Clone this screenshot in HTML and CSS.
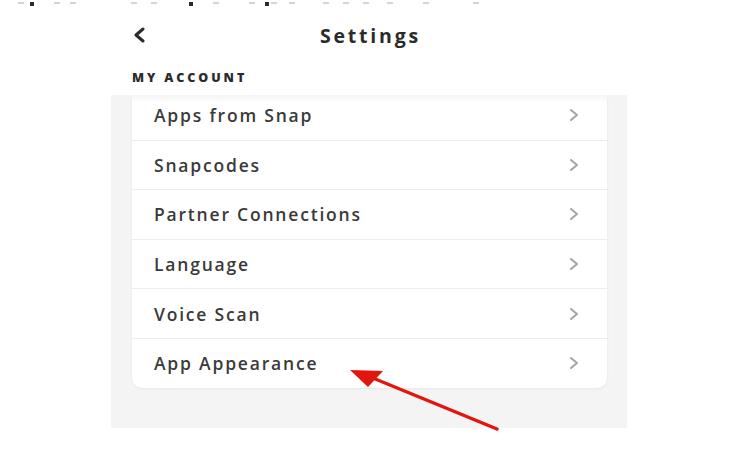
FILE: index.html
```html
<!DOCTYPE html>
<html>
<head>
<meta charset="utf-8">
<link rel="stylesheet" href="styles.css">
</head>
<body>
<div class="topline">
  <span class="mk" style="margin-left:18px"></span><span class="mk dk" style="margin-left:6px"></span><span class="mk" style="margin-left:20px"></span><span class="mk" style="margin-left:10px"></span><span class="mk" style="margin-left:55px"></span><span class="mk" style="margin-left:14px"></span><span class="mk dk" style="margin-left:32px"></span><span class="mk" style="margin-left:20px"></span><span class="mk" style="margin-left:30px"></span><span class="mk dk" style="margin-left:10px"></span><span class="mk" style="margin-left:2px"></span><span class="mk" style="margin-left:12px"></span><span class="mk" style="margin-left:28px"></span><span class="mk" style="margin-left:14px"></span><span class="mk" style="margin-left:14px"></span><span class="mk" style="margin-left:18px"></span><span class="mk" style="margin-left:30px"></span><span class="mk" style="margin-left:44px"></span>
</div>
<div class="screen">
  <div class="header">
    <svg class="back" width="14" height="16" viewBox="0 0 14 16"><polyline points="11,2 4,8 11,14" fill="none" stroke="#2b2b2b" stroke-width="3" stroke-linecap="round" stroke-linejoin="round"/></svg>
    <div class="title">Settings</div>
  </div>
  <div class="section">MY ACCOUNT</div>
  <div class="panel">
    <div class="card">
      <div class="row"><span>Apps from Snap</span><svg class="chev" width="10" height="14" viewBox="0 0 10 14"><polyline points="2,2 8,7 2,12" fill="none" stroke="#a3a3a3" stroke-width="2" stroke-linecap="round" stroke-linejoin="round"/></svg></div>
      <div class="row"><span>Snapcodes</span><svg class="chev" width="10" height="14" viewBox="0 0 10 14"><polyline points="2,2 8,7 2,12" fill="none" stroke="#a3a3a3" stroke-width="2" stroke-linecap="round" stroke-linejoin="round"/></svg></div>
      <div class="row"><span>Partner Connections</span><svg class="chev" width="10" height="14" viewBox="0 0 10 14"><polyline points="2,2 8,7 2,12" fill="none" stroke="#a3a3a3" stroke-width="2" stroke-linecap="round" stroke-linejoin="round"/></svg></div>
      <div class="row"><span>Language</span><svg class="chev" width="10" height="14" viewBox="0 0 10 14"><polyline points="2,2 8,7 2,12" fill="none" stroke="#a3a3a3" stroke-width="2" stroke-linecap="round" stroke-linejoin="round"/></svg></div>
      <div class="row"><span>Voice Scan</span><svg class="chev" width="10" height="14" viewBox="0 0 10 14"><polyline points="2,2 8,7 2,12" fill="none" stroke="#a3a3a3" stroke-width="2" stroke-linecap="round" stroke-linejoin="round"/></svg></div>
      <div class="row"><span>App Appearance</span><svg class="chev" width="10" height="14" viewBox="0 0 10 14"><polyline points="2,2 8,7 2,12" fill="none" stroke="#a3a3a3" stroke-width="2" stroke-linecap="round" stroke-linejoin="round"/></svg></div>
    </div>
  </div>
</div>
<svg class="arrow" width="750" height="450" viewBox="0 0 750 450">
  <line x1="497" y1="429" x2="368" y2="376" stroke="#e3150f" stroke-width="3.5" stroke-linecap="round"/>
  <polygon points="350,370 383,371 368,387" fill="#e3150f"/>
</svg>
</body>
</html>
```
FILE: styles.css
```css
html, body {
  margin: 0;
  padding: 0;
}
body {
  width: 750px;
  height: 450px;
  overflow: hidden;
  background: #ffffff;
  font-family: "Open Sans", "DejaVu Sans", sans-serif;
  color: #333333;
  position: relative;
}
.topline {
  height: 8px;
  display: flex;
  align-items: flex-start;
  padding-top: 2px;
  box-sizing: border-box;
}
.mk {
  display: block;
  width: 6px;
  height: 2px;
  background: #d2d4d9;
  flex: none;
}
.mk.dk {
  width: 4px;
  height: 4px;
  background: #2a2a30;
}
.screen {
  margin-left: 111px;
  width: 516px;
}
.header {
  height: 52px;
  display: flex;
  align-items: center;
  justify-content: center;
  position: relative;
}
.back {
  position: absolute;
  left: 21px;
  top: 19px;
}
.title {
  font-size: 19.5px;
  font-weight: 700;
  color: #2b2b2b;
  letter-spacing: 2.8px;
  margin-top: 2px;
  margin-left: 3px;
}
.section {
  height: 35px;
  padding-left: 21px;
  padding-top: 9px;
  box-sizing: border-box;
  font-size: 12.5px;
  font-weight: 800;
  color: #2b2b2b;
  letter-spacing: 2.9px;
}
.panel {
  background: #f4f4f5;
  height: 333px;
  padding: 0 20px 0 21px;
  overflow: hidden;
  box-sizing: border-box;
}
.card {
  margin-top: -5px;
  background: #ffffff;
  border-radius: 10px;
  box-shadow: 0 1px 3px rgba(0,0,0,0.06);
}
.row {
  height: 49.6px;
  box-sizing: border-box;
  display: flex;
  align-items: center;
  justify-content: space-between;
  padding: 0 28px 0 22px;
  font-size: 17.5px;
  font-weight: 600;
  letter-spacing: 1.8px;
  color: #3a3a3a;
}
.row + .row {
  border-top: 1px solid #ededed;
}
.row:first-child {
  background: linear-gradient(#ececec, #ffffff 12px);
}
.chev {
  flex: none;
}
.arrow {
  position: absolute;
  left: 0;
  top: 0;
}
```
